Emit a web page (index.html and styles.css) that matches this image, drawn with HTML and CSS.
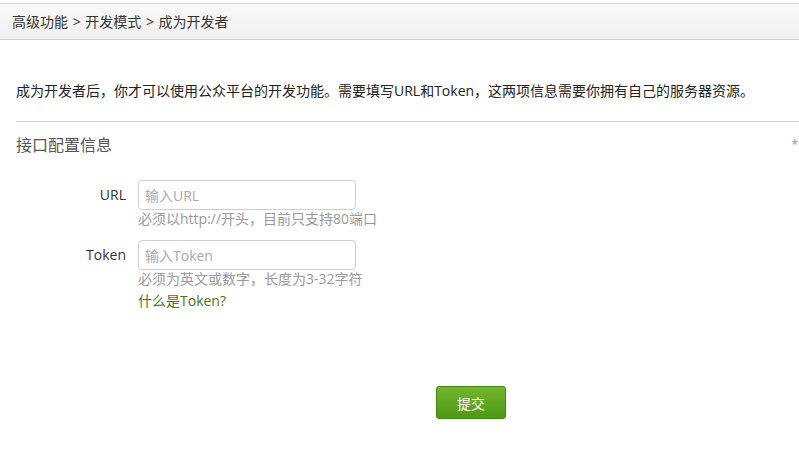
FILE: index.html
```html
<!DOCTYPE html>
<html lang="zh-CN">
<head>
<meta charset="utf-8">
<title>成为开发者</title>
<link rel="stylesheet" href="styles.css">
</head>
<body>
<div class="breadcrumb">高级功能 &gt; 开发模式 &gt; 成为开发者</div>
<div class="main">
  <p class="desc">成为开发者后，你才可以使用公众平台的开发功能。需要填写URL和Token，这两项信息需要你拥有自己的服务器资源。</p>
  <div class="section-head">
    <h2 class="section-title">接口配置信息</h2>
    <span class="required">*</span>
  </div>
  <form class="form">
    <div class="row">
      <label class="label" for="url">URL</label>
      <div class="field">
        <input class="input" id="url" type="text" placeholder="输入URL">
        <p class="hint">必须以http://开头，目前只支持80端口</p>
      </div>
    </div>
    <div class="row">
      <label class="label" for="token">Token</label>
      <div class="field">
        <input class="input" id="token" type="text" placeholder="输入Token">
        <p class="hint">必须为英文或数字，长度为3-32字符</p>
        <a class="link" href="#">什么是Token?</a>
      </div>
    </div>
    <div class="actions">
      <button class="btn" type="button">提交</button>
    </div>
  </form>
</div>
</body>
</html>
```
FILE: styles.css
```css
html, body {
  margin: 0;
  padding: 0;
  background: #fff;
  overflow: hidden;
}
body {
  padding-top: 3px;
  font-family: "Open Sans", "Noto Sans CJK SC", sans-serif;
  font-size: 14px;
  color: #222;
}
.breadcrumb {
  height: 35px;
  line-height: 35px;
  padding-left: 12px;
  border-top: 1px solid #d6d6d6;
  border-bottom: 1px solid #cfcfcf;
  background: linear-gradient(#f9f9f9, #f1f1f1);
  color: #333;
  font-size: 14px;
  word-spacing: 1px;
}
.main {
  padding-left: 16px;
}
.desc {
  margin: 41px 0 0;
  line-height: 20px;
  font-size: 14px;
  color: #222;
  padding-bottom: 20px;
  border-bottom: 1px solid #d4d4d4;
}
.section-head {
  display: flex;
  justify-content: space-between;
  align-items: flex-start;
  margin-top: 11px;
}
.section-title {
  margin: 0;
  font-weight: normal;
  font-size: 16px;
  line-height: 24px;
  color: #555;
}
.required {
  color: #999;
  line-height: 24px;
  margin-right: 1px;
  font-size: 12px;
}
.form {
  margin: 23px 0 0;
}
.row {
  display: flex;
  align-items: flex-start;
  gap: 12px;
  margin-bottom: 12px;
}
.label {
  width: 110px;
  text-align: right;
  line-height: 30px;
  color: #333;
  font-size: 14px;
}
.field {
  display: flex;
  flex-direction: column;
  align-items: flex-start;
}
.input {
  box-sizing: border-box;
  width: 218px;
  height: 30px;
  margin: 0;
  padding: 0 6px;
  border: 1px solid #cfcfcf;
  border-radius: 4px;
  font-family: inherit;
  font-size: 14px;
  color: #333;
  outline: none;
}
.input::placeholder {
  color: #aaa;
}
.hint {
  margin: 0;
  line-height: 18px;
  color: #999;
  font-size: 14px;
}
.link {
  margin-top: 4px;
  line-height: 18px;
  color: #4a7515;
  text-decoration: none;
  font-size: 14px;
}
.actions {
  padding-left: 420px;
  margin-top: 76px;
}
.btn {
  width: 70px;
  height: 33px;
  border: 1px solid #3f8a0e;
  border-radius: 3px;
  background: linear-gradient(#72b62c, #4d9913);
  color: #fff;
  font-family: inherit;
  font-size: 14px;
  box-shadow: 0 1px 1px rgba(0,0,0,0.15);
  cursor: pointer;
}
```
